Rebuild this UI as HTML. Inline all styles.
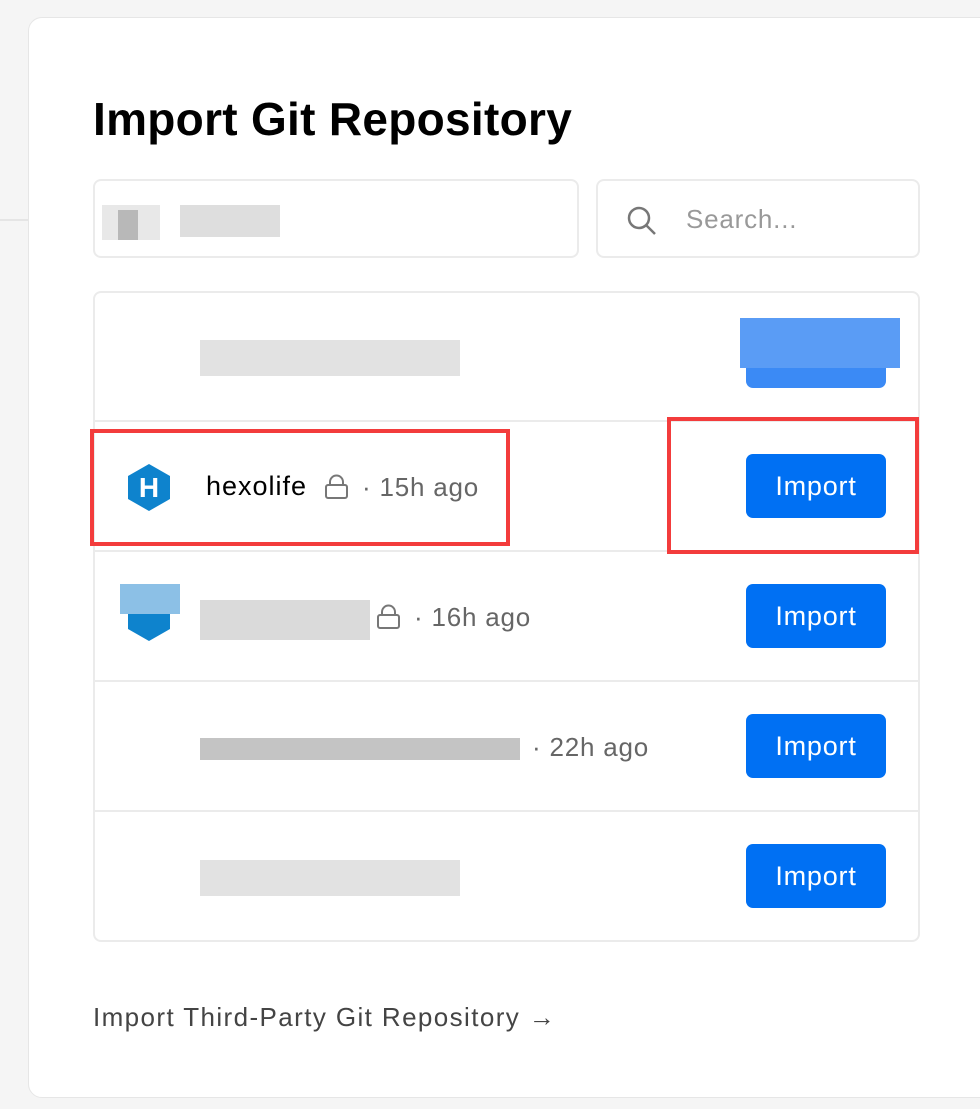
<!DOCTYPE html>
<html><head><style>
*{margin:0;padding:0;box-sizing:border-box}
body{width:980px;height:1109px;background:#f5f5f5;font-family:"Liberation Sans",sans-serif;position:relative;overflow:hidden}
.a{position:absolute}
.card{left:28px;top:17px;width:980px;height:1081px;background:#fff;border:1px solid #e6e6e6;border-radius:14px}
.box{border:2px solid #ebebeb;border-radius:8px;background:#fff}
.btn{left:746px;width:140px;height:64px;background:#0070f3;color:#fff;border-radius:7px;font-size:27px;letter-spacing:0.8px;text-align:center;line-height:64px}
.sep{left:94px;width:824px;height:2px;background:#ebebeb}
.t{font-size:26px;color:#666;letter-spacing:0.8px}
.px{background:#ddd}
.red{border:4px solid #f33c3c}
</style></head><body>
<div class="a" style="left:0;top:219px;width:30px;height:2px;background:#e5e5e5"></div>
<div class="a card"></div>
<div class="a" style="left:93px;top:92px;font-size:46px;font-weight:bold;color:#000;letter-spacing:0.3px">Import Git Repository</div>
<div class="a box" style="left:93px;top:179px;width:486px;height:79px"></div>
<div class="a px" style="left:102px;top:205px;width:58px;height:35px;background:#e8e8e8"></div>
<div class="a px" style="left:118px;top:210px;width:20px;height:30px;background:#b8b8b8"></div>
<div class="a px" style="left:180px;top:205px;width:100px;height:32px;background:#dedede"></div>
<div class="a box" style="left:596px;top:179px;width:324px;height:79px"></div>
<svg class="a" style="left:624px;top:203px" width="36" height="36" viewBox="0 0 36 36"><circle cx="15" cy="15" r="10" fill="none" stroke="#777" stroke-width="2.5"/><line x1="22" y1="22" x2="31" y2="31" stroke="#777" stroke-width="2.5"/></svg>
<div class="a t" style="left:686px;top:204px;color:#999">Search...</div>
<div class="a box" style="left:93px;top:291px;width:827px;height:651px"></div>
<div class="a sep" style="top:420px"></div>
<div class="a sep" style="top:550px"></div>
<div class="a sep" style="top:680px"></div>
<div class="a sep" style="top:810px"></div>
<div class="a px" style="left:200px;top:340px;width:260px;height:36px;background:#e2e2e2"></div>
<div class="a btn" style="top:324px;background:#3b8af5"></div>
<div class="a" style="left:740px;top:318px;width:160px;height:50px;background:#5a9cf5"></div>
<svg class="a" style="left:126px;top:462px" width="46" height="50" viewBox="0 0 46 50"><polygon points="23,2 44,14 44,37 23,49 2,37 2,14" fill="#0e83cd"/><text x="23" y="35" text-anchor="middle" font-family="Liberation Sans" font-weight="bold" font-size="28" fill="#fff">H</text></svg>
<div class="a" style="left:206px;top:471px;font-size:27px;color:#000;letter-spacing:1px">hexolife</div>
<svg class="a" style="left:324px;top:474px" width="26" height="26" viewBox="0 0 26 26"><rect x="2" y="11" width="21" height="13" rx="2" fill="none" stroke="#777" stroke-width="2"/><path d="M6 11V8a6.5 6.5 0 0 1 13 0v3" fill="none" stroke="#777" stroke-width="2"/></svg>
<div class="a t" style="left:362px;top:472px">· 15h ago</div>
<div class="a btn" style="top:454px">Import</div>
<svg class="a" style="left:126px;top:592px" width="46" height="50" viewBox="0 0 46 50"><polygon points="23,2 44,14 44,37 23,49 2,37 2,14" fill="#0e83cd"/></svg>
<div class="a" style="left:120px;top:584px;width:60px;height:30px;background:#8cc0e6"></div>
<div class="a px" style="left:200px;top:600px;width:170px;height:40px;background:#dadada"></div>
<svg class="a" style="left:376px;top:604px" width="26" height="26" viewBox="0 0 26 26"><rect x="2" y="11" width="21" height="13" rx="2" fill="none" stroke="#777" stroke-width="2"/><path d="M6 11V8a6.5 6.5 0 0 1 13 0v3" fill="none" stroke="#777" stroke-width="2"/></svg>
<div class="a t" style="left:414px;top:602px">· 16h ago</div>
<div class="a btn" style="top:584px">Import</div>
<div class="a px" style="left:200px;top:738px;width:320px;height:22px;background:#c4c4c4"></div>
<div class="a t" style="left:532px;top:732px">· 22h ago</div>
<div class="a btn" style="top:714px">Import</div>
<div class="a px" style="left:200px;top:860px;width:260px;height:36px;background:#e2e2e2"></div>
<div class="a btn" style="top:844px">Import</div>
<div class="a red" style="left:90px;top:429px;width:420px;height:117px"></div>
<div class="a red" style="left:667px;top:417px;width:252px;height:137px"></div>
<div class="a" style="left:93px;top:1002px;font-size:26px;color:#444;letter-spacing:1.4px">Import Third-Party Git Repository →</div>
</body></html>
